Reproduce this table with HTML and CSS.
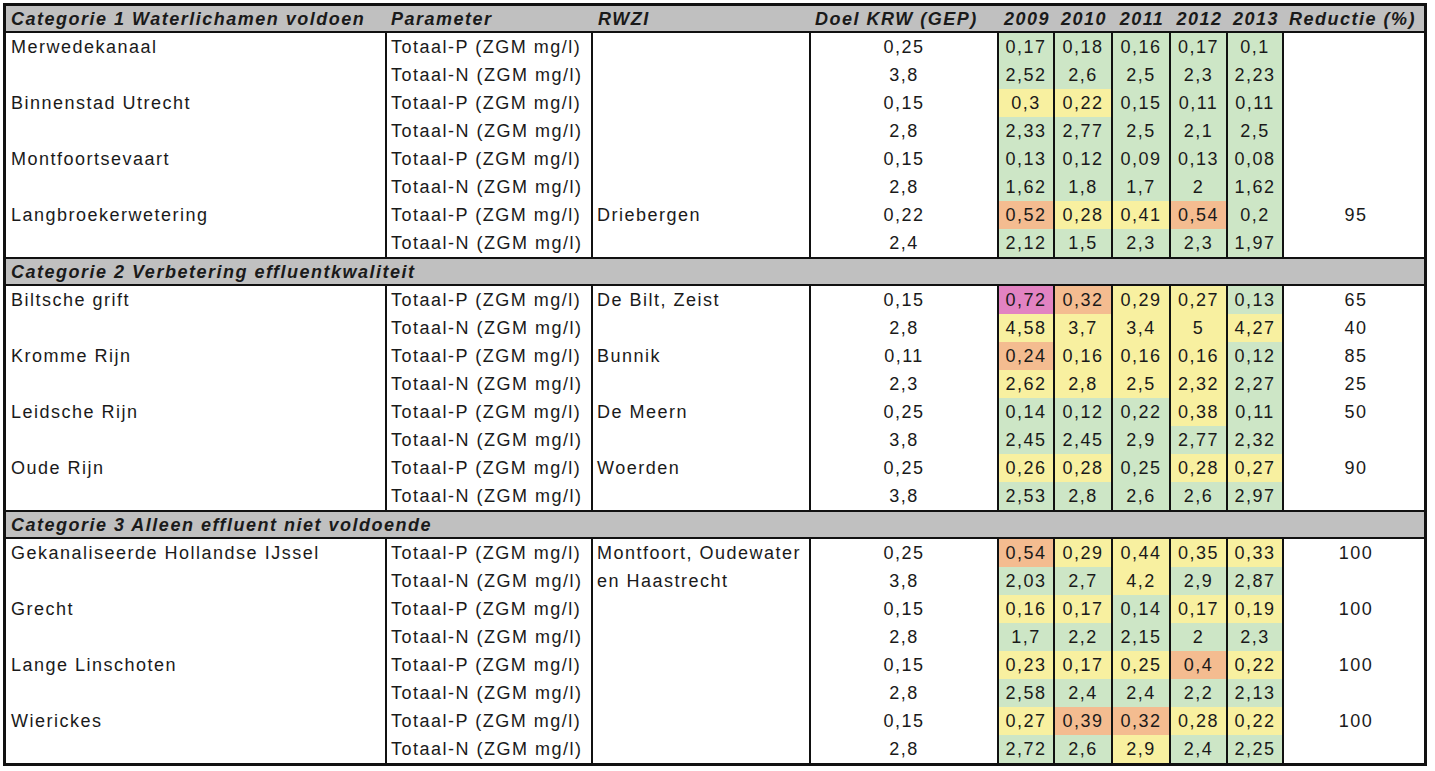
FILE: index.html
```html
<!DOCTYPE html>
<html lang="nl">
<head>
<meta charset="utf-8">
<title>KRW waterlichamen</title>
<link rel="stylesheet" href="styles.css">
</head>
<body>
<div class="sheet">
  <div class="row head">
    <div class="c name">Categorie 1 Waterlichamen voldoen</div>
    <div class="c param">Parameter</div>
    <div class="c rwzi">RWZI</div>
    <div class="c doel">Doel KRW (GEP)</div>
    <div class="c yr">2009</div>
    <div class="c yr">2010</div>
    <div class="c yr">2011</div>
    <div class="c yr">2012</div>
    <div class="c yr">2013</div>
    <div class="c red">Reductie (%)</div>
  </div>

  <div class="row"><div class="c name">Merwedekanaal</div><div class="c param">Totaal-P (ZGM mg/l)</div><div class="c rwzi"></div><div class="c doel">0,25</div><div class="c yr g">0,17</div><div class="c yr g">0,18</div><div class="c yr g">0,16</div><div class="c yr g">0,17</div><div class="c yr g">0,1</div><div class="c red"></div></div>
  <div class="row"><div class="c name"></div><div class="c param">Totaal-N (ZGM mg/l)</div><div class="c rwzi"></div><div class="c doel">3,8</div><div class="c yr g">2,52</div><div class="c yr g">2,6</div><div class="c yr g">2,5</div><div class="c yr g">2,3</div><div class="c yr g">2,23</div><div class="c red"></div></div>
  <div class="row"><div class="c name">Binnenstad Utrecht</div><div class="c param">Totaal-P (ZGM mg/l)</div><div class="c rwzi"></div><div class="c doel">0,15</div><div class="c yr y">0,3</div><div class="c yr y">0,22</div><div class="c yr g">0,15</div><div class="c yr g">0,11</div><div class="c yr g">0,11</div><div class="c red"></div></div>
  <div class="row"><div class="c name"></div><div class="c param">Totaal-N (ZGM mg/l)</div><div class="c rwzi"></div><div class="c doel">2,8</div><div class="c yr g">2,33</div><div class="c yr g">2,77</div><div class="c yr g">2,5</div><div class="c yr g">2,1</div><div class="c yr g">2,5</div><div class="c red"></div></div>
  <div class="row"><div class="c name">Montfoortsevaart</div><div class="c param">Totaal-P (ZGM mg/l)</div><div class="c rwzi"></div><div class="c doel">0,15</div><div class="c yr g">0,13</div><div class="c yr g">0,12</div><div class="c yr g">0,09</div><div class="c yr g">0,13</div><div class="c yr g">0,08</div><div class="c red"></div></div>
  <div class="row"><div class="c name"></div><div class="c param">Totaal-N (ZGM mg/l)</div><div class="c rwzi"></div><div class="c doel">2,8</div><div class="c yr g">1,62</div><div class="c yr g">1,8</div><div class="c yr g">1,7</div><div class="c yr g">2</div><div class="c yr g">1,62</div><div class="c red"></div></div>
  <div class="row"><div class="c name">Langbroekerwetering</div><div class="c param">Totaal-P (ZGM mg/l)</div><div class="c rwzi">Driebergen</div><div class="c doel">0,22</div><div class="c yr o">0,52</div><div class="c yr y">0,28</div><div class="c yr y">0,41</div><div class="c yr o">0,54</div><div class="c yr g">0,2</div><div class="c red">95</div></div>
  <div class="row"><div class="c name"></div><div class="c param">Totaal-N (ZGM mg/l)</div><div class="c rwzi"></div><div class="c doel">2,4</div><div class="c yr g">2,12</div><div class="c yr g">1,5</div><div class="c yr g">2,3</div><div class="c yr g">2,3</div><div class="c yr g">1,97</div><div class="c red"></div></div>

  <div class="cat">Categorie 2 Verbetering effluentkwaliteit</div>

  <div class="row"><div class="c name">Biltsche grift</div><div class="c param">Totaal-P (ZGM mg/l)</div><div class="c rwzi">De Bilt, Zeist</div><div class="c doel">0,15</div><div class="c yr p">0,72</div><div class="c yr o">0,32</div><div class="c yr y">0,29</div><div class="c yr y">0,27</div><div class="c yr g">0,13</div><div class="c red">65</div></div>
  <div class="row"><div class="c name"></div><div class="c param">Totaal-N (ZGM mg/l)</div><div class="c rwzi"></div><div class="c doel">2,8</div><div class="c yr y">4,58</div><div class="c yr y">3,7</div><div class="c yr y">3,4</div><div class="c yr y">5</div><div class="c yr y">4,27</div><div class="c red">40</div></div>
  <div class="row"><div class="c name">Kromme Rijn</div><div class="c param">Totaal-P (ZGM mg/l)</div><div class="c rwzi">Bunnik</div><div class="c doel">0,11</div><div class="c yr o">0,24</div><div class="c yr y">0,16</div><div class="c yr y">0,16</div><div class="c yr y">0,16</div><div class="c yr g">0,12</div><div class="c red">85</div></div>
  <div class="row"><div class="c name"></div><div class="c param">Totaal-N (ZGM mg/l)</div><div class="c rwzi"></div><div class="c doel">2,3</div><div class="c yr y">2,62</div><div class="c yr y">2,8</div><div class="c yr y">2,5</div><div class="c yr y">2,32</div><div class="c yr g">2,27</div><div class="c red">25</div></div>
  <div class="row"><div class="c name">Leidsche Rijn</div><div class="c param">Totaal-P (ZGM mg/l)</div><div class="c rwzi">De Meern</div><div class="c doel">0,25</div><div class="c yr g">0,14</div><div class="c yr g">0,12</div><div class="c yr g">0,22</div><div class="c yr y">0,38</div><div class="c yr g">0,11</div><div class="c red">50</div></div>
  <div class="row"><div class="c name"></div><div class="c param">Totaal-N (ZGM mg/l)</div><div class="c rwzi"></div><div class="c doel">3,8</div><div class="c yr g">2,45</div><div class="c yr g">2,45</div><div class="c yr g">2,9</div><div class="c yr g">2,77</div><div class="c yr g">2,32</div><div class="c red"></div></div>
  <div class="row"><div class="c name">Oude Rijn</div><div class="c param">Totaal-P (ZGM mg/l)</div><div class="c rwzi">Woerden</div><div class="c doel">0,25</div><div class="c yr y">0,26</div><div class="c yr y">0,28</div><div class="c yr g">0,25</div><div class="c yr y">0,28</div><div class="c yr y">0,27</div><div class="c red">90</div></div>
  <div class="row"><div class="c name"></div><div class="c param">Totaal-N (ZGM mg/l)</div><div class="c rwzi"></div><div class="c doel">3,8</div><div class="c yr g">2,53</div><div class="c yr g">2,8</div><div class="c yr g">2,6</div><div class="c yr g">2,6</div><div class="c yr g">2,97</div><div class="c red"></div></div>

  <div class="cat">Categorie 3 Alleen effluent niet voldoende</div>

  <div class="row"><div class="c name">Gekanaliseerde Hollandse IJssel</div><div class="c param">Totaal-P (ZGM mg/l)</div><div class="c rwzi">Montfoort, Oudewater</div><div class="c doel">0,25</div><div class="c yr o">0,54</div><div class="c yr y">0,29</div><div class="c yr y">0,44</div><div class="c yr y">0,35</div><div class="c yr y">0,33</div><div class="c red">100</div></div>
  <div class="row"><div class="c name"></div><div class="c param">Totaal-N (ZGM mg/l)</div><div class="c rwzi">en Haastrecht</div><div class="c doel">3,8</div><div class="c yr g">2,03</div><div class="c yr g">2,7</div><div class="c yr y">4,2</div><div class="c yr g">2,9</div><div class="c yr g">2,87</div><div class="c red"></div></div>
  <div class="row"><div class="c name">Grecht</div><div class="c param">Totaal-P (ZGM mg/l)</div><div class="c rwzi"></div><div class="c doel">0,15</div><div class="c yr y">0,16</div><div class="c yr y">0,17</div><div class="c yr g">0,14</div><div class="c yr y">0,17</div><div class="c yr y">0,19</div><div class="c red">100</div></div>
  <div class="row"><div class="c name"></div><div class="c param">Totaal-N (ZGM mg/l)</div><div class="c rwzi"></div><div class="c doel">2,8</div><div class="c yr g">1,7</div><div class="c yr g">2,2</div><div class="c yr g">2,15</div><div class="c yr g">2</div><div class="c yr g">2,3</div><div class="c red"></div></div>
  <div class="row"><div class="c name">Lange Linschoten</div><div class="c param">Totaal-P (ZGM mg/l)</div><div class="c rwzi"></div><div class="c doel">0,15</div><div class="c yr y">0,23</div><div class="c yr y">0,17</div><div class="c yr y">0,25</div><div class="c yr o">0,4</div><div class="c yr y">0,22</div><div class="c red">100</div></div>
  <div class="row"><div class="c name"></div><div class="c param">Totaal-N (ZGM mg/l)</div><div class="c rwzi"></div><div class="c doel">2,8</div><div class="c yr g">2,58</div><div class="c yr g">2,4</div><div class="c yr g">2,4</div><div class="c yr g">2,2</div><div class="c yr g">2,13</div><div class="c red"></div></div>
  <div class="row"><div class="c name">Wierickes</div><div class="c param">Totaal-P (ZGM mg/l)</div><div class="c rwzi"></div><div class="c doel">0,15</div><div class="c yr y">0,27</div><div class="c yr o">0,39</div><div class="c yr o">0,32</div><div class="c yr y">0,28</div><div class="c yr y">0,22</div><div class="c red">100</div></div>
  <div class="row"><div class="c name"></div><div class="c param">Totaal-N (ZGM mg/l)</div><div class="c rwzi"></div><div class="c doel">2,8</div><div class="c yr g">2,72</div><div class="c yr g">2,6</div><div class="c yr y">2,9</div><div class="c yr g">2,4</div><div class="c yr g">2,25</div><div class="c red"></div></div>
</div>
</body>
</html>
```

FILE: styles.css
```css
* { box-sizing: border-box; }
html, body { margin: 0; background: #fff; }
body {
  padding: 3px 0 0 3px;
  font-family: "Liberation Sans", Arial, sans-serif;
  font-size: 18px;
  letter-spacing: 1.5px;
  color: #1a1a1a;
}
.sheet {
  width: 1424px;
  border: 3px solid #111;
}
.row {
  display: grid;
  grid-template-columns: 381px 206px 218px 188px 56px 58px 58px 57px 56px 140px;
  height: 28px;
}
.c {
  border-right: 2px solid #111;
  line-height: 27px;
  padding-top: 1px;
  white-space: nowrap;
  padding-left: 5px;
}
.param, .rwzi { padding-left: 4px; }
.doel, .yr { text-align: center; padding-left: 0; }
.c.red { border-right: none; text-align: center; padding-left: 4px; }
.g { background: #cde6c6; }
.y { background: #f8f0a0; }
.o { background: #f4bc90; }
.p { background: #e283c2; }

.head {
  height: 27px;
  background: #c0c0c0;
  border-bottom: 2px solid #111;
  font-weight: bold;
  font-style: italic;
}
.head .c { border-right: none; line-height: 25px; padding-top: 1px; }
.head .doel { text-align: left; padding-left: 4px; }
.head .c.red { text-align: left; padding-left: 5px; }
.head .rwzi { padding-left: 5px; }

.cat {
  height: 29px;
  background: #c0c0c0;
  border-top: 2px solid #111;
  border-bottom: 2px solid #111;
  font-weight: bold;
  font-style: italic;
  line-height: 25px;
  padding-top: 1px;
  padding-left: 5px;
}
```
